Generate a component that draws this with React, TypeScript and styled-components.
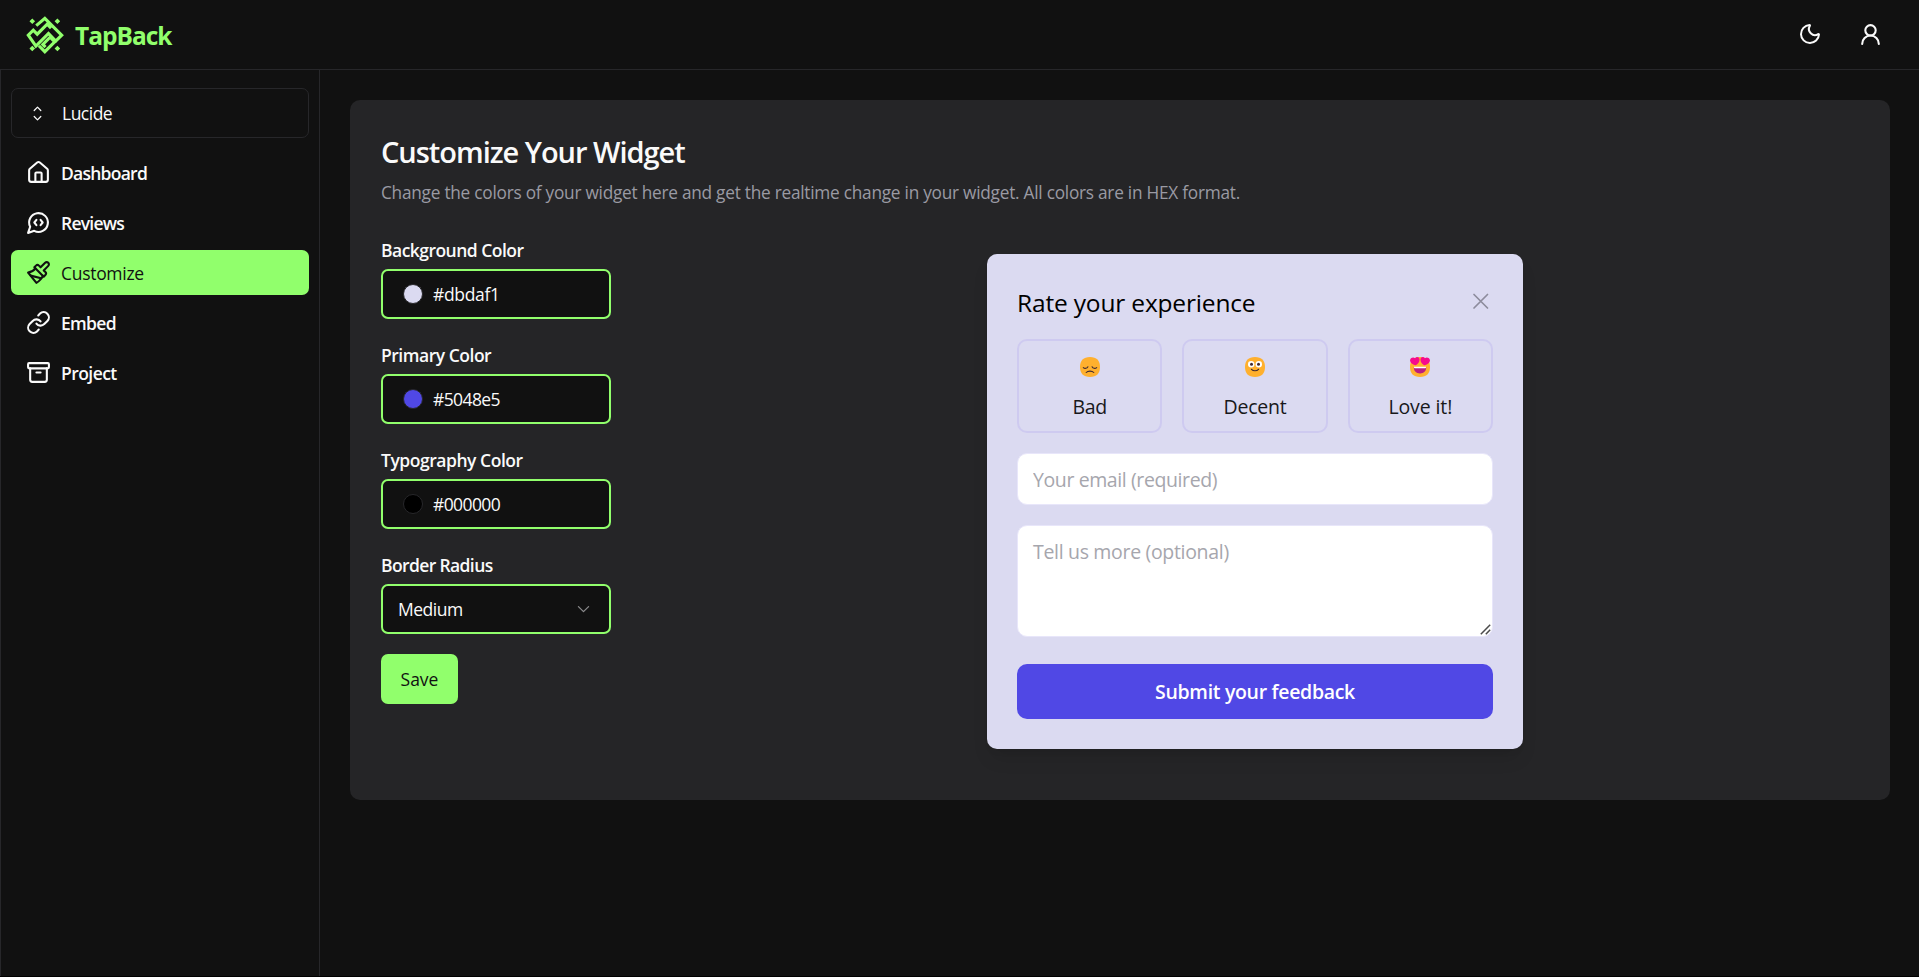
import React from "react";
import styled, { createGlobalStyle, css } from "styled-components";
import { Archive, House, Link, Moon, UserRound } from "lucide-react";

const GlobalStyle = createGlobalStyle`
  *, *::before, *::after { box-sizing: border-box; }
  body {
    margin: 0;
    background: #111111;
    color: #fafafa;
    font-family: "Open Sans", "Segoe UI", sans-serif;
    font-size: 17.5px;
  }
  button, input, textarea { font: inherit; color: inherit; }
`;

const GREEN = "#91ff6c";
const LINE = "#27272a";

type Tracked = { $track?: number };
const tracking = css<Tracked>`
  letter-spacing: ${({ $track = 0 }) => $track}px;
`;

const Page = styled.div`
  display: flex;
  flex-direction: column;
  height: 100vh;
  border-bottom: 1px solid #000000;
`;

const Header = styled.header`
  display: flex;
  align-items: center;
  justify-content: space-between;
  flex: none;
  height: 70px;
  padding: 0 24px 0 26px;
  border-bottom: 1px solid ${LINE};
`;

const Brand = styled.div`
  display: flex;
  align-items: center;
  gap: 11px;
  color: ${GREEN};
`;

const BrandName = styled.span`
  padding-top: 2px;
  font-size: 24.5px;
  font-weight: 700;
  line-height: 36px;
  letter-spacing: -1px;
`;

const HeaderActions = styled.div`
  display: flex;
  gap: 12px;
  padding-bottom: 1px;
`;

const IconButton = styled.button`
  display: grid;
  place-items: center;
  width: 49px;
  height: 49px;
  padding: 0;
  border: 0;
  background: none;
`;

const Body = styled.div`
  display: flex;
  flex: 1;
`;

const Sidebar = styled.aside`
  display: flex;
  flex-direction: column;
  gap: 12px;
  flex: none;
  width: 320px;
  padding: 18px 10px;
  border: 1px solid ${LINE};
  border-width: 0 1px;
`;

const ProjectSelect = styled.button`
  display: flex;
  align-items: center;
  gap: 15px;
  height: 50px;
  padding: 0 16px;
  border: 1px solid ${LINE};
  border-radius: 7px;
  background: none;
  letter-spacing: -0.5px;
`;

const Nav = styled.nav`
  display: flex;
  flex-direction: column;
  gap: 5px;
`;

const NavItem = styled.a<Tracked & { $active?: boolean }>`
  display: flex;
  align-items: center;
  gap: 10px;
  height: 45px;
  padding: 0 15px;
  border-radius: 7px;
  background: ${({ $active }) => ($active ? GREEN : "transparent")};
  color: ${({ $active }) => ($active ? "#111111" : "#fafafa")};
  font-weight: ${({ $active }) => ($active ? 400 : 600)};
  ${tracking}
`;

const Main = styled.main`
  flex: 1;
  padding: 30px 29px 30px 30px;
`;

const Card = styled.section`
  height: 700px;
  padding: 31px;
  border-radius: 10px;
  background: #252527;
`;

const CardTitle = styled.h2`
  margin: 0 0 8px;
  font-size: 29px;
  font-weight: 600;
  line-height: 41px;
  letter-spacing: -1.02px;
`;

const CardText = styled.p`
  margin: 0;
  color: #9a9aa3;
  font-size: 17.25px;
  line-height: 26px;
  letter-spacing: -0.25px;
`;

const CardBody = styled.div`
  display: flex;
  align-items: flex-start;
  gap: 376px;
  padding-top: 31px;
`;

const Form = styled.form`
  display: flex;
  flex-direction: column;
  align-items: flex-start;
  gap: 23px;
  width: 230px;
`;

const Field = styled.div`
  display: flex;
  flex-direction: column;
  gap: 6px;
  width: 100%;
`;

const FieldLabel = styled.span<Tracked>`
  font-weight: 600;
  line-height: 26px;
  ${tracking}
`;

const ControlBox = styled.div<Tracked & { $select?: boolean }>`
  display: flex;
  align-items: center;
  justify-content: ${({ $select }) => ($select ? "space-between" : "flex-start")};
  gap: 10px;
  height: 50px;
  padding: 0 ${({ $select }) => ($select ? "16px 0 15px" : "20px")};
  border: 2px solid ${GREEN};
  border-radius: 7px;
  background: #111111;
  ${tracking}
`;

const Swatch = styled.span<{ $color: string }>`
  width: 20px;
  height: 20px;
  border: 1px solid ${LINE};
  border-radius: 50%;
  background: ${({ $color }) => $color};
`;

const SaveButton = styled.button`
  width: 77px;
  height: 50px;
  margin-top: -3px;
  padding: 0;
  border: 0;
  border-radius: 7px;
  background: ${GREEN};
  color: #111111;
`;

const Widget = styled.div`
  display: flex;
  flex-direction: column;
  width: 536px;
  margin-top: 17px;
  padding: 30px;
  border-radius: 10px;
  background: #dbdaf1;
  color: #000000;
  font-size: 19.5px;
  box-shadow: 0 12px 19px -4px rgba(0, 0, 0, 0.1), 0 5px 8px -5px rgba(0, 0, 0, 0.1);
`;

const WidgetHeader = styled.div`
  display: flex;
  align-items: flex-start;
  justify-content: space-between;
  margin-bottom: 18px;
  font-size: 24.5px;
  line-height: 37px;
  letter-spacing: -0.17px;
`;

const CloseButton = styled.button`
  display: grid;
  padding: 5px 0 0;
  border: 0;
  background: none;
`;

const Ratings = styled.div`
  display: grid;
  grid-template-columns: repeat(3, 1fr);
  gap: 20px;
  margin-bottom: 20px;
`;

const Rating = styled.button<Tracked>`
  display: flex;
  flex-direction: column;
  align-items: center;
  gap: 15px;
  height: 94px;
  padding: 16px 0 0;
  border: 2px solid #cecaf0;
  border-radius: 10px;
  background: none;
  color: #18181b;
  line-height: 30px;
  ${tracking}
`;

const entry = css`
  width: 100%;
  border: 1px solid #e8e6fa;
  border-radius: 10px;
  background: #ffffff;
  outline: 0;
  &::placeholder { color: #a6a6ad; opacity: 1; }
`;

const EmailInput = styled.input`
  ${entry}
  height: 52px;
  margin-bottom: 20px;
  padding: 0 15px;
  letter-spacing: -0.4px;
`;

const CommentWrap = styled.div`
  position: relative;
  margin-bottom: 27px;
`;

const CommentInput = styled.textarea`
  ${entry}
  display: block;
  height: 112px;
  padding: 11px 15px;
  line-height: 30px;
  letter-spacing: -0.32px;
  resize: none;
`;

const Grip = styled.svg`
  position: absolute;
  right: 2px;
  bottom: 2px;
`;

const SubmitButton = styled.button`
  height: 55px;
  padding: 0;
  border: 0;
  border-radius: 10px;
  background: #5048e5;
  color: #ffffff;
  font-weight: 600;
  letter-spacing: -0.32px;
`;

const Logo = () => (
  <svg width="38" height="38" viewBox="0 0 115 115" fill="none" stroke="currentColor" strokeWidth="9.500">
    <path d="M31 29 57 7l51 51-18 18-22-23-38 38L7 58l15-15 12 12 30-30 12 12" />
    <path d="M39 90l18 18 30-30-14-14-22 22 8 8" />
    <path
      d="M19 7.500l8.500 8.500-8.500 8.500L10.500 16ZM95 7.500l8.500 8.500-8.500 8.500-8.500-8.500ZM19 90l8.500 8.500-8.500 8.500-8.500-8.500ZM95 90l8.500 8.500-8.500 8.500-8.500-8.500Z"
      fill="currentColor"
      stroke="none"
    />
  </svg>
);

const PaintbrushIcon = () => (
  <svg width="25" height="25" viewBox="0 0 24 24" fill="none" stroke="currentColor" strokeWidth="2" strokeLinecap="round" strokeLinejoin="round">
    <path d="M18.37 2.63 14 7l-1.59-1.59a2 2 0 0 0-2.82 0L8 7l9 9 1.59-1.59a2 2 0 0 0 0-2.82L17 10l4.37-4.37a2.12 2.12 0 1 0-3-3Z" />
    <path d="M9 8c-2 3-4 3.5-7 4l8 10c2-1 6-5 6-7" />
    <path d="M14.5 17.5 4.5 15" />
  </svg>
);

const ReviewIcon = () => (
  <svg width="25" height="25" viewBox="0 0 24 24" fill="none" stroke="currentColor" strokeWidth="2" strokeLinecap="round" strokeLinejoin="round">
    <path d="M7.900 20A9 9 0 1 0 4 16.100L2 22Z" />
    <path d="M10 9.5 8 12l2 2.500" />
    <path d="m14 9.5 2 2.500-2 2.500" />
  </svg>
);

const SortIcon = () => (
  <svg width="19" height="19" viewBox="0 0 15 15" fill="none" stroke="currentColor" strokeLinecap="round" strokeLinejoin="round">
    <path d="M4.900 5.100 7.500 2.500l2.600 2.600M4.900 9.900l2.600 2.600 2.600-2.600" />
  </svg>
);

const ChevronIcon = () => (
  <svg width="19" height="19" viewBox="0 0 15 15" fill="none" stroke="#8b8b8d" strokeLinecap="round" strokeLinejoin="round">
    <path d="M3.500 5.200 7.500 9.200l4-4" />
  </svg>
);

const CloseIcon = () => (
  <svg width="25" height="25" viewBox="0 0 25 25" fill="none" stroke="#8d8c9d" strokeWidth="1.700" strokeLinecap="round">
    <path d="m6 5.500 13.500 13.500M19.500 5.500 6 19" />
  </svg>
);

const Face = ({ children }: { children: React.ReactNode }) => (
  <svg width="20" height="20" viewBox="0 0 20 20" fill="none" strokeLinecap="round">
    <path d="M10 0c6.600 0 10 3.600 10 10s-3.400 10-10 10S0 16.400 0 10 3.400 0 10 0Z" fill="#ffb02e" />
    {children}
  </svg>
);

const SadFace = () => (
  <Face>
    <path
      d="M3.300 10.600c1.500 1.300 3.700.9 4.600-.9M16.700 10.600c-1.500 1.300-3.700.9-4.600-.9M6.200 15.500c1.700-1.900 5.900-1.900 7.600 0"
      stroke="#402a32"
      strokeWidth="1.100"
    />
  </Face>
);

const OkFace = () => (
  <Face>
    <circle cx="6.200" cy="7.200" r="3.200" fill="#fff" />
    <circle cx="13.800" cy="7.200" r="3.200" fill="#fff" />
    <circle cx="6.500" cy="7.300" r="1.500" fill="#402a32" />
    <circle cx="13.500" cy="7.300" r="1.500" fill="#402a32" />
    <path d="M6.500 12.300c1.700 1.900 5.300 1.900 7 0" stroke="#402a32" strokeWidth="1.200" />
  </Face>
);

const LoveFace = () => (
  <Face>
    <path d="M3.800 10.200h12.400c0 4-2.500 6.200-6.200 6.200s-6.200-2.200-6.200-6.200Z" fill="#bb1d80" />
    <path d="M4 9.800h12v.7c0 .4-.4.700-.8.700H4.800c-.4 0-.8-.3-.8-.7Z" fill="#fff" />
    <path d="M5.100 1.200C6.400-.6 9.300-.1 9.500 2.300c.2 2.500-1.600 4.600-3.700 6C3 7.700.5 6.300.1 4-.3 1.400 2.800-.5 5.100 1.200Z" fill="#f70a8d" />
    <path d="M14.900 1.200C13.600-.6 10.700-.1 10.500 2.300c-.2 2.500 1.600 4.600 3.700 6 2.800-.6 5.300-2 5.700-4.300.4-2.600-2.700-4.500-5-2.800Z" fill="#f70a8d" />
  </Face>
);

const navItems = [
  { label: "Dashboard", icon: <House size={25} />, track: -0.75 },
  { label: "Reviews", icon: <ReviewIcon />, track: -0.75 },
  { label: "Customize", icon: <PaintbrushIcon />, track: -0.3, active: true },
  { label: "Embed", icon: <Link size={25} />, track: -0.7 },
  { label: "Project", icon: <Archive size={25} />, track: -0.55 },
];

const colorFields = [
  { label: "Background Color", value: "#dbdaf1", valueTrack: -0.35, track: -0.53 },
  { label: "Primary Color", value: "#5048e5", valueTrack: -0.6, track: -0.48 },
  { label: "Typography Color", value: "#000000", valueTrack: -0.6, track: -0.46 },
];

const ratings = [
  { label: "Bad", face: <SadFace />, track: -0.3 },
  { label: "Decent", face: <OkFace />, track: -0.2 },
  { label: "Love it!", face: <LoveFace />, track: -0.1 },
];

export default function App() {
  return (
    <>
      <GlobalStyle />
      <Page>
        <Header>
          <Brand>
            <Logo />
            <BrandName>TapBack</BrandName>
          </Brand>
          <HeaderActions>
            <IconButton aria-label="Theme">
              <Moon size={24} />
            </IconButton>
            <IconButton aria-label="Account">
              <UserRound size={25} />
            </IconButton>
          </HeaderActions>
        </Header>
        <Body>
          <Sidebar>
            <ProjectSelect>
              <SortIcon />
              Lucide
            </ProjectSelect>
            <Nav>
              {navItems.map((item) => (
                <NavItem key={item.label} $active={item.active} $track={item.track}>
                  {item.icon}
                  {item.label}
                </NavItem>
              ))}
            </Nav>
          </Sidebar>
          <Main>
            <Card>
              <CardTitle>Customize Your Widget</CardTitle>
              <CardText>
                Change the colors of your widget here and get the realtime change in your widget. All colors are in HEX
                format.
              </CardText>
              <CardBody>
                <Form>
                  {colorFields.map((field) => (
                    <Field key={field.label}>
                      <FieldLabel $track={field.track}>{field.label}</FieldLabel>
                      <ControlBox $track={field.valueTrack}>
                        <Swatch $color={field.value} />
                        {field.value}
                      </ControlBox>
                    </Field>
                  ))}
                  <Field>
                    <FieldLabel $track={-0.62}>Border Radius</FieldLabel>
                    <ControlBox $select $track={-0.5}>
                      Medium
                      <ChevronIcon />
                    </ControlBox>
                  </Field>
                  <SaveButton type="button">Save</SaveButton>
                </Form>
                <Widget>
                  <WidgetHeader>
                    Rate your experience
                    <CloseButton aria-label="Close">
                      <CloseIcon />
                    </CloseButton>
                  </WidgetHeader>
                  <Ratings>
                    {ratings.map((rating) => (
                      <Rating key={rating.label} $track={rating.track}>
                        {rating.face}
                        {rating.label}
                      </Rating>
                    ))}
                  </Ratings>
                  <EmailInput placeholder="Your email (required)" />
                  <CommentWrap>
                    <CommentInput placeholder="Tell us more (optional)" />
                    <Grip width="11" height="11" viewBox="0 0 11 11" stroke="#4a4a4a" strokeWidth="1.500">
                      <path d="M.8 10.200 10.200.8M5.800 10.200l4.400-4.400" />
                    </Grip>
                  </CommentWrap>
                  <SubmitButton>Submit your feedback</SubmitButton>
                </Widget>
              </CardBody>
            </Card>
          </Main>
        </Body>
      </Page>
    </>
  );
}
